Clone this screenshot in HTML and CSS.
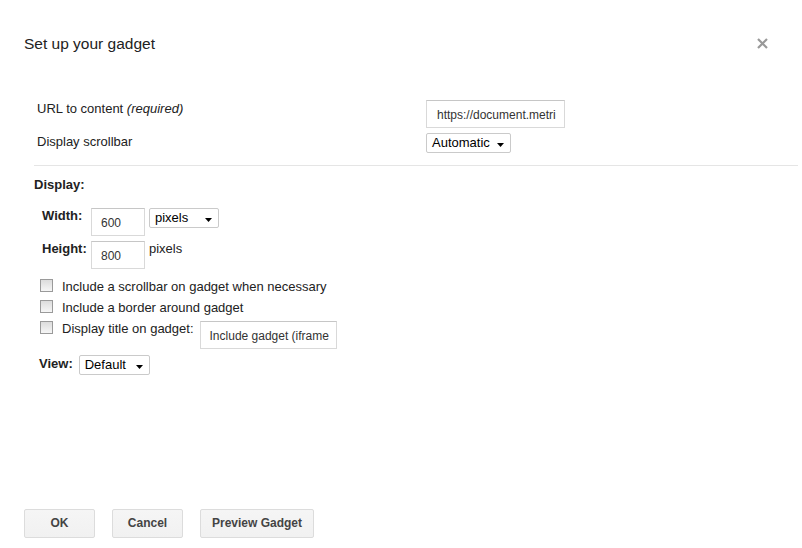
FILE: index.html
```html
<!DOCTYPE html>
<html>
<head>
<meta charset="utf-8">
<title>Set up your gadget</title>
<link rel="stylesheet" href="styles.css">
</head>
<body>
<div class="dialog">
  <div class="header">
    <div class="title">Set up your gadget</div>
    <svg class="close" width="11" height="11" viewBox="0 0 11 11"><path d="M1 1L10 10M10 1L1 10" stroke="#999" stroke-width="2.2" fill="none"/></svg>
  </div>

  <div class="fields">
    <div class="flabel">URL to content <i>(required)</i></div>
    <div class="input url-input">https://document.metri</div>
    <div class="flabel">Display scrollbar</div>
    <div class="select sel-auto"><span>Automatic</span><svg class="arrow" width="7" height="4" viewBox="0 0 7 4"><path d="M0 0H7L3.5 4Z" fill="#000"/></svg></div>
  </div>

  <div class="sep"></div>

  <div class="display">
    <div class="section-label">Display:</div>

    <div class="dim-row first">
      <div class="dim-label">Width:</div>
      <div class="input dim-input">600</div>
      <div class="select sel-pixels"><span>pixels</span><svg class="arrow" width="7" height="4" viewBox="0 0 7 4"><path d="M0 0H7L3.5 4Z" fill="#000"/></svg></div>
    </div>
    <div class="dim-row">
      <div class="dim-label">Height:</div>
      <div class="input dim-input">800</div>
      <div class="unit">pixels</div>
    </div>

    <div class="checks">
      <div class="check-row"><span class="cb"></span><span>Include a scrollbar on gadget when necessary</span></div>
      <div class="check-row"><span class="cb"></span><span>Include a border around gadget</span></div>
      <div class="check-row"><span class="cb"></span><span>Display title on gadget:</span><div class="input title-input">Include gadget (iframe</div></div>
    </div>

    <div class="view-row">
      <div class="view-label">View:</div>
      <div class="select sel-view"><span>Default</span><svg class="arrow" width="7" height="4" viewBox="0 0 7 4"><path d="M0 0H7L3.5 4Z" fill="#000"/></svg></div>
    </div>
  </div>

  <div class="footer">
    <div class="btn btn-ok">OK</div>
    <div class="btn">Cancel</div>
    <div class="btn">Preview Gadget</div>
  </div>
</div>
</body>
</html>
```

FILE: styles.css
```css
html, body {
  margin: 0;
  padding: 0;
  background: #fff;
}
body {
  font-family: "Liberation Sans", Arial, sans-serif;
  font-size: 13px;
  line-height: 15px;
  color: #222;
}
.dialog {
  display: flex;
  flex-direction: column;
  height: 548px;
  box-sizing: border-box;
}
.header {
  display: flex;
  justify-content: space-between;
  align-items: flex-start;
  padding: 35px 34px 0 24px;
}
.title {
  font-size: 15.5px;
  line-height: 18px;
  color: #222;
}
.close {
  margin-top: 3px;
  display: block;
}
.fields {
  margin-top: 47px;
  padding-left: 37px;
  display: grid;
  grid-template-columns: 389px auto;
  row-gap: 5px;
  align-items: start;
}
.flabel {
  margin-top: 1px;
}
.flabel i {
  font-style: italic;
}
.input {
  box-sizing: border-box;
  border: 1px solid #d9d9d9;
  border-top-color: #c6c6c6;
  background: #fff;
  font-size: 12px;
  color: #333;
  white-space: nowrap;
  overflow: hidden;
  padding-left: 9px;
  padding-top: 2px;
  display: flex;
  align-items: center;
}
.url-input {
  width: 139px;
  height: 28px;
  padding-left: 10px;
}
.select {
  box-sizing: border-box;
  height: 20px;
  border: 1px solid #cacaca;
  border-radius: 2px;
  background: #fff;
  display: flex;
  justify-content: space-between;
  align-items: flex-start;
  padding: 0 6px 0 5px;
  line-height: 17px;
  color: #000;
  font-size: 13px;
}
.select .arrow {
  display: block;
  margin-top: 9px;
}
.sel-auto { width: 85px; }
.sel-pixels { width: 70px; margin-left: 4px; }
.sel-view { width: 71px; margin-left: 6px; }

.sep {
  margin: 12px 4px 0 34px;
  border-top: 1px solid #e5e5e5;
}
.display {
  padding-left: 34px;
}
.section-label {
  font-weight: bold;
  margin-top: 11px;
  color: #222;
}
.dim-row {
  display: flex;
  align-items: flex-start;
  padding-left: 8px;
  margin-top: 5px;
}
.dim-row.first {
  margin-top: 16px;
}
.dim-label {
  width: 49px;
  font-weight: bold;
}
.dim-input {
  width: 54px;
  height: 28px;
}
.unit {
  margin-left: 4px;
}
.checks {
  margin-top: 10px;
  padding-left: 6px;
  display: flex;
  flex-direction: column;
  row-gap: 6px;
}
.check-row {
  display: flex;
  align-items: flex-start;
}
.cb {
  box-sizing: border-box;
  width: 13px;
  height: 13px;
  border: 1px solid #9a9a9a;
  background: linear-gradient(#dcdcdc, #f6f6f6);
  margin-right: 9px;
  flex: none;
}
.title-input {
  width: 137px;
  height: 28px;
  margin-left: 6px;
}
.view-row {
  display: flex;
  align-items: flex-start;
  margin-top: 6px;
  padding-left: 5px;
}
.view-label {
  font-weight: bold;
  margin-top: 1px;
}
.footer {
  margin-top: auto;
  padding: 0 0 10px 24px;
  display: flex;
  column-gap: 17px;
}
.btn {
  box-sizing: border-box;
  height: 29px;
  min-width: 71px;
  padding: 0 11px;
  border: 1px solid #dcdcdc;
  border-radius: 2px;
  background: linear-gradient(#f5f5f5, #f1f1f1);
  color: #444;
  font-weight: bold;
  font-size: 12px;
  display: flex;
  align-items: center;
  justify-content: center;
}
```
